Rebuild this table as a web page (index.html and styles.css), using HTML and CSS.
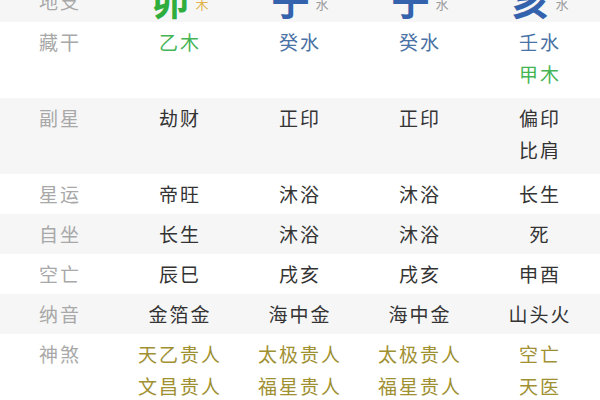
FILE: index.html
```html
<!DOCTYPE html>
<html lang="zh-CN">
<head>
<meta charset="utf-8">
<link rel="stylesheet" href="styles.css">
</head>
<body>
<div class="table">
  <div class="top">
    <div class="top-inner">
      <div class="c label">地支</div>
      <div class="c"><span class="big green-b">卯</span><span class="sm sm-y">木</span></div>
      <div class="c"><span class="big blue-b">子</span><span class="sm">水</span></div>
      <div class="c"><span class="big blue-b">子</span><span class="sm">水</span></div>
      <div class="c"><span class="big blue-b">亥</span><span class="sm">水</span></div>
    </div>
  </div>
  <div class="row tall">
    <div class="c label">藏干</div>
    <div class="c green">乙木</div>
    <div class="c blue">癸水</div>
    <div class="c blue">癸水</div>
    <div class="c"><span class="blue">壬水</span><br><span class="green">甲木</span></div>
  </div>
  <div class="row tall gray">
    <div class="c label">副星</div>
    <div class="c">劫财</div>
    <div class="c">正印</div>
    <div class="c">正印</div>
    <div class="c">偏印<br>比肩</div>
  </div>
  <div class="row single">
    <div class="c label">星运</div>
    <div class="c">帝旺</div>
    <div class="c">沐浴</div>
    <div class="c">沐浴</div>
    <div class="c">长生</div>
  </div>
  <div class="row single gray">
    <div class="c label">自坐</div>
    <div class="c">长生</div>
    <div class="c">沐浴</div>
    <div class="c">沐浴</div>
    <div class="c">死</div>
  </div>
  <div class="row single">
    <div class="c label">空亡</div>
    <div class="c">辰巳</div>
    <div class="c">戌亥</div>
    <div class="c">戌亥</div>
    <div class="c">申酉</div>
  </div>
  <div class="row single gray">
    <div class="c label">纳音</div>
    <div class="c">金箔金</div>
    <div class="c">海中金</div>
    <div class="c">海中金</div>
    <div class="c">山头火</div>
  </div>
  <div class="row tall">
    <div class="c label">神煞</div>
    <div class="c gold">天乙贵人<br>文昌贵人</div>
    <div class="c gold">太极贵人<br>福星贵人</div>
    <div class="c gold">太极贵人<br>福星贵人</div>
    <div class="c gold">空亡<br>天医</div>
  </div>
</div>
</body>
</html>
```
FILE: styles.css
```css
html, body {
  margin: 0;
  padding: 0;
  background: #ffffff;
}
body {
  width: 600px;
  height: 400px;
  overflow: hidden;
  font-family: "Noto Sans CJK SC", "Noto Sans", sans-serif;
  color: #333333;
}
.table {
  display: flex;
  flex-direction: column;
}
.row,
.top-inner {
  display: grid;
  grid-template-columns: repeat(5, 120px);
  font-size: 19px;
  letter-spacing: 2px;
}
.c {
  text-align: center;
}
.gray {
  background: #f6f6f6;
}
.single {
  padding: 5px 0 6px;
  line-height: 29px;
}
.tall {
  padding: 4px 0 8px;
  line-height: 32px;
}
.label {
  color: #a8a8a8;
}
.green {
  color: #45b455;
}
.blue {
  color: #4a72a6;
}
.gold {
  color: #9f9032;
}
.top {
  height: 22px;
  overflow: hidden;
  background: #f6f6f6;
}
.top-inner {
  margin-top: -26px;
  height: 50px;
  line-height: 50px;
  align-items: center;
}
.top-inner > .label {
  margin-top: -4px;
}
.big {
  font-size: 38px;
  font-weight: 700;
  letter-spacing: 0;
}
.green-b {
  color: #2fae3e;
}
.blue-b {
  color: #3462ad;
}
.sm {
  font-size: 13px;
  color: #9a9a9a;
  vertical-align: 6px;
  margin-left: 6px;
  letter-spacing: 0;
}
.sm-y {
  color: #e0b44a;
}
```
